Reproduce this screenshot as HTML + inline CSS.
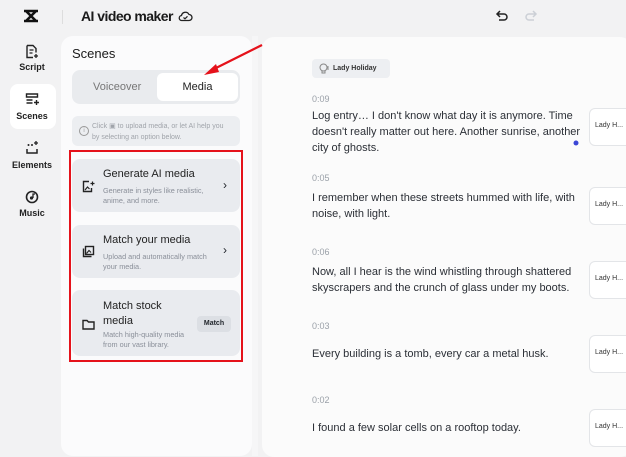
<!DOCTYPE html><html><head><style>
*{margin:0;padding:0;box-sizing:border-box}
body{width:626px;height:450px;overflow:hidden;background:#f2f2f3;font-family:"Liberation Sans",sans-serif;position:relative;color:#1f2329}
.a{position:absolute}
.nav{position:absolute;left:8px;width:48px;text-align:center;font-size:9px;font-weight:bold;color:#222}
.card{position:absolute;left:72px;width:168px;background:#e9ebef;border-radius:8px}
.ct{position:absolute;left:31px;font-size:11px;color:#222}
.cs{position:absolute;left:31px;font-size:7.3px;color:#8a8f99;line-height:10px}
.t{position:absolute;left:312px;font-size:9px;color:#9aa0a8}
.p{position:absolute;left:312px;width:270px;font-size:11px;line-height:16px;color:#2b2f36}
.side{position:absolute;left:589px;width:45px;height:38px;background:#fff;border:1px solid #e3e5e8;border-radius:6px;font-size:7px;color:#333;padding:13px 0 0 5px}
</style></head><body>
<svg class="a" style="left:22px;top:8px" width="18" height="16" viewBox="0 0 18 16"><path d="M2 3h14M2 13h14M4 3l10 10M14 3L4 13" stroke="#111" stroke-width="2.6" fill="none"/></svg>
<div class="a" style="left:62px;top:10px;width:1px;height:14px;background:#ddd"></div>
<div class="a" style="left:81px;top:8px;font-size:14px;font-weight:bold;color:#1a1a1a;letter-spacing:-0.55px">AI video maker</div>
<svg class="a" style="left:178px;top:10px" width="15" height="12" viewBox="0 0 15 12"><path d="M4 10.5h7a3 3 0 0 0 0-6 4 4 0 0 0-7.5 1A2.5 2.5 0 0 0 4 10.5z" fill="none" stroke="#222" stroke-width="1.3"/><path d="M5.5 7.5l1.5 1.3 2.5-2.5" fill="none" stroke="#222" stroke-width="1.2"/></svg>
<svg class="a" style="left:495px;top:9px" width="14" height="14" viewBox="0 0 14 14"><path d="M3 5h6a3 3 0 0 1 0 6H4M5 2L2 5l3 3" fill="none" stroke="#222" stroke-width="1.5"/></svg>
<svg class="a" style="left:524px;top:9px" width="14" height="14" viewBox="0 0 14 14"><path d="M11 5H5a3 3 0 0 0 0 6h5M9 2l3 3-3 3" fill="none" stroke="#ccd0d6" stroke-width="1.5"/></svg>
<svg class="a" style="left:25px;top:44px" width="14" height="15" viewBox="0 0 14 15"><path d="M2 1.5h6l3 3v4M11 12.5v-1M2 1.5v12h6" fill="none" stroke="#222" stroke-width="1.4"/><path d="M4.5 6h4M4.5 9h3M9 12h4M11 10v4" stroke="#222" stroke-width="1.3"/></svg>
<div class="nav" style="top:62px">Script</div>
<div class="a" style="left:10px;top:84px;width:46px;height:45px;background:#fff;border-radius:8px"></div>
<svg class="a" style="left:25px;top:92px" width="14" height="14" viewBox="0 0 14 14"><path d="M1.5 2h11v3h-11zM1.5 8h6M1.5 11h6M9 10.5h5M11.5 8v5" fill="none" stroke="#222" stroke-width="1.4"/></svg>
<div class="nav" style="top:111px">Scenes</div>
<svg class="a" style="left:25px;top:141px" width="14" height="14" viewBox="0 0 14 14"><path d="M2 8v4h10V8" fill="none" stroke="#222" stroke-width="1.5"/><path d="M9 2h4M11 0v4" stroke="#222" stroke-width="1.3"/><circle cx="3.5" cy="4" r="1" fill="#222"/><circle cx="7" cy="4" r="1" fill="#222"/></svg>
<div class="nav" style="top:160px">Elements</div>
<svg class="a" style="left:25px;top:190px" width="14" height="14" viewBox="0 0 14 14"><circle cx="7" cy="7" r="5.5" fill="none" stroke="#222" stroke-width="1.6"/><circle cx="6.5" cy="8" r="1.6" fill="#222"/><path d="M8 8V4h2" fill="none" stroke="#222" stroke-width="1.3"/></svg>
<div class="nav" style="top:208px">Music</div>
<div class="a" style="left:61px;top:36px;width:191px;height:420px;background:#fbfbfc;border-radius:12px"></div>
<div class="a" style="left:252px;top:36px;width:6px;height:420px;background:#f6f6f7"></div>
<div class="a" style="left:72px;top:46px;font-size:13px;color:#1a1a1a">Scenes</div>
<div class="a" style="left:72px;top:70px;width:168px;height:34px;background:#e9ebee;border-radius:8px"></div>
<div class="a" style="left:93px;top:81px;font-size:11px;color:#777">Voiceover</div>
<div class="a" style="left:157px;top:73px;width:81px;height:28px;background:#fff;border-radius:6px;text-align:center;line-height:28px;font-size:11px;color:#222">Media</div>
<div class="a" style="left:72px;top:116px;width:168px;height:30px;background:#eceef1;border-radius:6px"></div>
<div class="a" style="left:79px;top:126px;width:10px;height:10px;border:1px solid #999;border-radius:50%;font-size:6px;text-align:center;line-height:8px;color:#999">i</div>
<div class="a" style="left:92px;top:121px;font-size:7px;color:#a0a4aa;line-height:11px">Click ▣ to upload media, or let AI help you<br>by selecting an option below.</div>
<div class="card" style="top:159px;height:53px"><svg class="a" style="left:10px;top:21px" width="13" height="13" viewBox="0 0 13 13"><path d="M7 1.5H1.5v10h8V8" fill="none" stroke="#222" stroke-width="1.4"/><path d="M3 10l2.5-3 2 2" fill="none" stroke="#222" stroke-width="1.2"/><path d="M8.5 3.5h4M10.5 1.5v4" stroke="#222" stroke-width="1.2"/></svg><div class="ct" style="top:9px">Generate AI media</div><div class="cs" style="top:27px">Generate in styles like realistic,<br>anime, and more.</div><div class="a" style="left:151px;top:19px;font-size:12px">›</div></div>
<div class="card" style="top:225px;height:53px"><svg class="a" style="left:10px;top:20px" width="13" height="13" viewBox="0 0 13 13"><path d="M1.5 3.5v8h8" fill="none" stroke="#222" stroke-width="1.4"/><rect x="3.5" y="1.5" width="8" height="8" fill="none" stroke="#222" stroke-width="1.4"/><path d="M4.5 8.5l2.5-3 2 2" fill="none" stroke="#222" stroke-width="1.1"/></svg><div class="ct" style="top:9px">Match your media</div><div class="cs" style="top:27px">Upload and automatically match<br>your media.</div><div class="a" style="left:151px;top:18px;font-size:12px">›</div></div>
<div class="card" style="top:290px;height:66px"><svg class="a" style="left:10px;top:29px" width="13" height="11" viewBox="0 0 13 11"><path d="M1 1.5h4l1.5 1.5H12v7H1z" fill="none" stroke="#222" stroke-width="1.4"/></svg><div class="ct" style="top:9px;line-height:15px">Match stock<br>media</div><div class="cs" style="top:40px">Match high-quality media<br>from our vast library.</div><div class="a" style="left:125px;top:26px;width:34px;height:16px;background:#dcdfe4;border-radius:4px;font-size:7px;font-weight:bold;text-align:center;line-height:16px">Match</div></div>
<div class="a" style="left:69px;top:150px;width:174px;height:212px;border:2px solid #e5121b"></div>
<div class="a" style="left:262px;top:37px;width:370px;height:420px;background:#fbfbfb;border-radius:12px"></div>
<div class="a" style="left:312px;top:59px;width:78px;height:19px;background:#edeff2;border-radius:4px;font-size:7px;font-weight:bold;color:#333;padding:6px 0 0 21px">Lady Holiday</div>
<svg class="a" style="left:319px;top:63px" width="11" height="11" viewBox="0 0 11 11"><circle cx="4.5" cy="4.5" r="3.5" fill="none" stroke="#888" stroke-width="1"/><path d="M3 8v2h3V8M9 3v4" stroke="#888" stroke-width="1" fill="none"/></svg>
<svg class="a" style="left:0;top:0" width="626" height="450"><path d="M262 45L212 70" stroke="#e5121b" stroke-width="2.2"/><path d="M204 75l12-11 3 8z" fill="#e5121b"/><circle cx="576" cy="143" r="2.5" fill="#3b47d6"/></svg>
<div class="t" style="top:94px">0:09</div>
<div class="p" style="top:108px">Log entry… I don't know what day it is anymore. Time doesn't really matter out here. Another sunrise, another city of ghosts.</div>
<div class="side" style="top:108px">Lady H...</div>
<div class="t" style="top:173px">0:05</div>
<div class="p" style="top:190px">I remember when these streets hummed with life, with noise, with light.</div>
<div class="side" style="top:187px">Lady H...</div>
<div class="t" style="top:247px">0:06</div>
<div class="p" style="top:264px">Now, all I hear is the wind whistling through shattered skyscrapers and the crunch of glass under my boots.</div>
<div class="side" style="top:261px">Lady H...</div>
<div class="t" style="top:321px">0:03</div>
<div class="p" style="top:346px">Every building is a tomb, every car a metal husk.</div>
<div class="side" style="top:335px">Lady H...</div>
<div class="t" style="top:395px">0:02</div>
<div class="p" style="top:420px">I found a few solar cells on a rooftop today.</div>
<div class="side" style="top:409px">Lady H...</div>
</body></html>
